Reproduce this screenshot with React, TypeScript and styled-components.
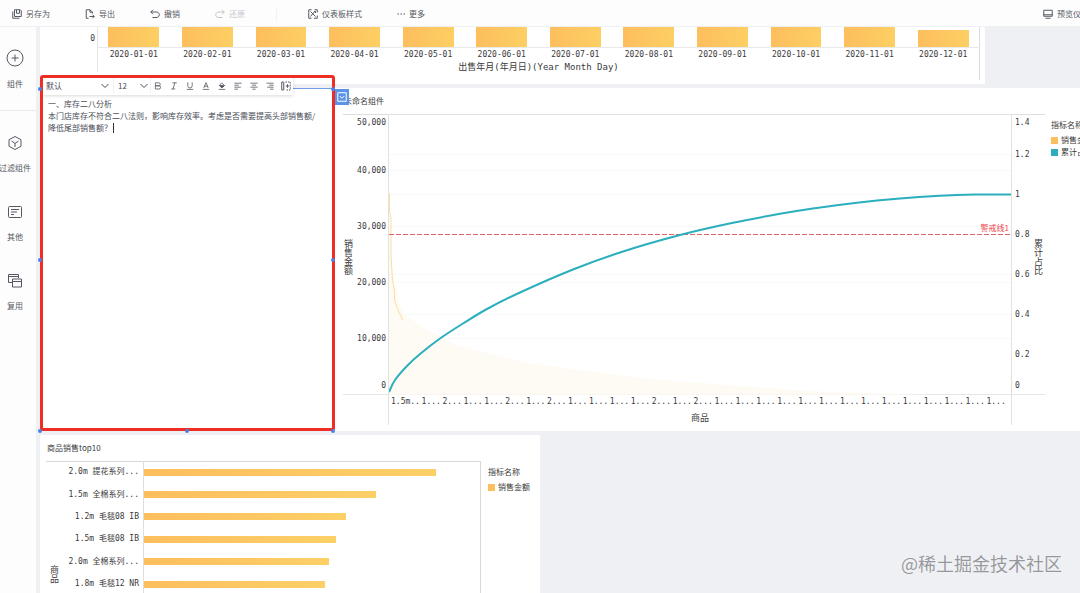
import React from 'react';
import styled, { createGlobalStyle } from 'styled-components';

const sans = '"Noto Sans CJK SC", "Noto Sans", sans-serif';
const mono = '"DejaVu Sans Mono", "Noto Sans CJK SC", monospace';

const GlobalStyle = createGlobalStyle`
  * { box-sizing: border-box; }
  body { margin: 0; background: #eef0f4; }
  button, select, textarea { font: inherit; color: inherit; }
  svg { display: block; flex: none; }
`;

const Page = styled.div`
  position: relative;
  display: flex;
  flex-direction: column;
  height: 100vh;
  overflow: hidden;
  font-family: ${sans};
  font-size: 8px;
  line-height: 12px;
  color: #4a4d57;
`;

/* ---------- top bar ---------- */

const TopBar = styled.header`
  display: flex;
  align-items: center;
  flex: none;
  gap: 35px;
  height: 27px;
  padding: 1px 0 0 12px;
  background: #fdfdfe;
  border-bottom: 1px solid #eff0f3;
`;

const BarButton = styled.button<{ $muted?: boolean; $end?: boolean }>`
  display: flex;
  align-items: center;
  flex: none;
  gap: 4px;
  padding: 0;
  border: 0;
  background: none;
  white-space: nowrap;
  color: ${(p) => (p.$muted ? '#c3c5cb' : '#565962')};
  ${(p) => p.$end && 'margin-left: auto; width: 37px; overflow: hidden;'}
`;

const BarDivider = styled.span`
  width: 1px;
  height: 14px;
  margin: 0 -4px;
  background: #f1f2f5;
`;

/* ---------- side bar ---------- */

const Body = styled.div`
  display: flex;
  flex: 1;
  min-height: 0;
`;

const SideBar = styled.nav`
  flex: none;
  width: 36px;
  background: #fdfdfe;
`;

const SideGroup = styled.div`
  display: flex;
  flex-direction: column;
  gap: 28px;
  padding: 22px 6px 0 0;

  & + & {
    padding-top: 24px;
    border-top: 1px solid #e9eaee;
  }
  &:first-child {
    height: 83px;
  }
`;

const SideButton = styled.button`
  display: flex;
  flex-direction: column;
  align-items: center;
  gap: 11px;
  height: 41px;
  padding: 0;
  border: 0;
  background: none;
  white-space: nowrap;
  color: #565962;
`;

/* ---------- canvas ---------- */

const Canvas = styled.main`
  display: flex;
  flex-direction: column;
  gap: 4px;
  flex: 1;
  min-width: 0;
  padding-left: 4px;
  background: #eef0f4;
`;

const Card = styled.section`
  background: #fff;
`;

const CardTitle = styled.h2`
  margin: 0;
  font-size: 8px;
  font-weight: 400;
  line-height: 26px;
  color: #3a3a3a;
`;

const AxisTitle = styled.div`
  font-family: ${mono};
  font-size: 9px;
  line-height: 12px;
  text-align: center;
  color: #3a3a3a;
`;

const VerticalTitle = styled.div`
  align-self: center;
  writing-mode: vertical-rl;
  text-orientation: upright;
  font-size: 9px;
  line-height: 10px;
  white-space: nowrap;
  color: #3a3a3a;
`;

/* monthly chart */

const MonthlyCard = styled(Card)`
  display: flex;
  flex: none;
  height: 57px;
  margin-right: 95px;
  padding: 0 5px 0 3px;
`;

const MonthlyAxis = styled.div`
  width: 55px;
  height: 45px;
  padding: 6px 2px 0 0;
  border-right: 1px solid #e6e6e6;
  font-family: ${mono};
  text-align: right;
  color: #3a3a3a;
`;

const MonthlyPlot = styled.div`
  flex: 1;
  height: 53px;
  border-right: 1px solid #dcdcdc;
`;

const Months = styled.div`
  display: grid;
  grid-template-columns: repeat(12, 1fr);
  margin: 0 -1px;
`;

const Month = styled.div`
  display: flex;
  flex-direction: column;
  align-items: center;
  justify-content: flex-end;
  height: 34px;
  font-family: ${mono};
  line-height: 13px;
  color: #3a3a3a;
`;

const MonthBar = styled.div<{ $short: boolean }>`
  width: 69%;
  height: ${(p) => (p.$short ? 17 : 20)}px;
  background: linear-gradient(90deg, #fdbe5e, #fdcf63);
`;

const MonthLabel = styled.div`
  width: 100%;
  border-top: 1px solid #e9e9e9;
  text-align: center;
`;

/* text editor widget */

const MiddleRow = styled.div`
  display: flex;
  flex: none;
`;

const EditorCard = styled(Card)`
  position: relative;
  flex: none;
  width: 293px;
  border-top: 1px solid #6f9de8;
`;

const Highlight = styled.div`
  position: absolute;
  inset: -14px -2px 0 0;
  border: 3px solid #ee2d24;
  border-radius: 3px;
  pointer-events: none;
`;

const Handle = styled.span<{ $x: number; $y: number }>`
  position: absolute;
  left: ${(p) => p.$x}%;
  top: ${(p) => p.$y}%;
  width: 4px;
  height: 4px;
  margin: -2px;
  border-radius: 50%;
  background: #4b83e2;
`;

const FormatBar = styled.div`
  position: absolute;
  top: -13px;
  left: 3px;
  display: flex;
  align-items: center;
  height: 19px;
  background: #fff;
  box-shadow: 0 1px 3px rgba(0, 0, 0, 0.15);
`;

const SelectBox = styled.label<{ $wide?: boolean }>`
  display: flex;
  align-items: center;
  width: ${(p) => (p.$wide ? 71 : 37)}px;
  height: 15px;
  padding: ${(p) => (p.$wide ? '0 4px 0 3px' : '0 2px 0 4px')};
  border-right: 1px solid #f0f0f0;

  select {
    flex: 1;
    min-width: 0;
    padding: 0;
    border: 0;
    outline: 0;
    appearance: none;
    background: none;
  }
`;

const FormatButton = styled.button`
  display: flex;
  align-items: center;
  justify-content: center;
  width: 14px;
  height: 14px;
  margin-right: 2px;
  padding: 0;
  border: 0;
  background: none;
  color: #555862;

  &:last-child {
    margin-right: 0;
  }
`;

const EditorText = styled.textarea`
  display: block;
  width: 100%;
  height: 100%;
  padding: 9px 4px 0 8px;
  border: 0;
  outline: 0;
  resize: none;
  background: none;
  font-size: 8px;
  line-height: 12px;
`;

const Caret = styled.span`
  position: absolute;
  top: 34px;
  left: 73px;
  width: 1px;
  height: 10px;
  background: #333;
`;

const MenuButton = styled.button`
  position: absolute;
  z-index: 1;
  top: 0;
  left: 295px;
  display: flex;
  align-items: center;
  justify-content: center;
  width: 14px;
  height: 16px;
  padding: 0;
  border: 0;
  background: #5b92ea;
  color: #fff;
`;

/* combined chart */

const ComboCard = styled(Card)`
  flex: 1;
  min-width: 0;
  height: 343px;
  padding-left: 10px;
  overflow: hidden;
`;

const ComboTitle = styled(CardTitle)`
  padding-left: 1px;
`;

const ComboBody = styled.div`
  display: flex;
`;

const ComboAxis = styled.div<{ $right?: boolean }>`
  display: flex;
  flex: none;
  justify-content: space-between;
  width: ${(p) => (p.$right ? 33 : 45)}px;
  height: 281px;
  padding: ${(p) => (p.$right ? '0 2px 0 3px' : '0 2px 0 0')};
  border-top: 1px solid #dedede;
  border-bottom: 1px solid #e6e6e6;

  ${VerticalTitle} {
    padding-top: 4px;
  }
`;

const Ticks = styled.ol<{ $share: number; $right?: boolean }>`
  display: flex;
  flex-direction: column;
  margin: 0;
  padding: 0;
  list-style: none;
  font-family: ${mono};
  color: #3a3a3a;

  li {
    display: flex;
    align-items: center;
    justify-content: ${(p) => (p.$right ? 'flex-start' : 'flex-end')};
    height: ${(p) => p.$share}px;
  }
  li:first-child {
    height: 16px;
    margin-bottom: auto;
  }
  li:last-child {
    height: 16px;
    margin-top: auto;
  }
`;

const ComboPlot = styled.div`
  flex: 1;
  min-width: 0;
  height: 311px;
  border: solid #e2e2e2;
  border-width: 1px 1px 0;
`;

const PlotArea = styled.div`
  position: relative;
  height: 280px;
  border-bottom: 1px solid #e6e6e6;
`;

const WarningLabel = styled.span`
  position: absolute;
  right: 2px;
  top: 107px;
  color: #f04049;
`;

const ProductTicks = styled.div`
  display: flex;
  justify-content: space-between;
  padding: 1px 5px 4px 2px;
  font-family: ${mono};
  white-space: nowrap;
  color: #3a3a3a;
`;

const Legend = styled.div<{ $clipped?: boolean }>`
  flex: none;
  width: ${(p) => (p.$clipped ? 35 : 59)}px;
  padding: 5px 0 0 ${(p) => (p.$clipped ? 6 : 7)}px;
  overflow: hidden;
  white-space: nowrap;
  color: #3a3a3a;
`;

const LegendTitle = styled.div`
  margin-bottom: 3px;
`;

const LegendItem = styled.div<{ $color: string }>`
  display: flex;
  align-items: center;
  gap: 3px;

  &::before {
    content: '';
    flex: none;
    width: 7px;
    height: 7px;
    background: ${(p) => p.$color};
  }
`;

/* top ten chart */

const TopCard = styled(Card)`
  flex: none;
  width: calc(50% - 20px);
  padding-left: 6px;
`;

const TopTitle = styled(CardTitle)`
  padding-left: 1px;
`;

const TopBody = styled.div`
  display: flex;
`;

const TopChart = styled.div`
  display: flex;
  flex: 1;
  height: 224px;
  border: solid #d9d9d9;
  border-width: 1px 1px 0 0;
`;

const TopAxisTitle = styled(VerticalTitle)`
  width: 16px;
  text-align: center;
  line-height: 16px;
`;

const Rows = styled.div`
  display: grid;
  grid-template-rows: repeat(10, 1fr);
  flex: 1;
  margin-top: -1px;
`;

const ProductRow = styled.div`
  display: flex;
`;

const ProductName = styled.span`
  display: flex;
  align-items: center;
  justify-content: flex-end;
  width: 82px;
  padding-right: 4px;
  border-right: 1px solid #dedede;
  font-family: ${mono};
  white-space: pre;
  color: #3a3a3a;
`;

const Track = styled.span`
  display: flex;
  align-items: center;
  flex: 1;
`;

const ProductBar = styled.span<{ $share: number }>`
  width: ${(p) => p.$share}%;
  height: 7px;
  background: linear-gradient(90deg, #fdbe5e, #fdd067);
`;

const Watermark = styled.div`
  position: absolute;
  right: 18px;
  bottom: 18px;
  font-size: 18px;
  line-height: 24px;
  color: #97989b;
  text-shadow: 0 0 1px #fff;
`;

/* ---------- icons ---------- */

type IconProps = { size?: number; box?: number; children: React.ReactNode; width?: number };

const Icon = ({ size = 10, box = 20, width = 2, children }: IconProps) => (
  <svg
    width={size}
    height={size}
    viewBox={`0 0 ${box} ${box}`}
    fill="none"
    stroke="currentColor"
    strokeWidth={width}
    aria-hidden="true"
  >
    {children}
  </svg>
);

const SaveIcon = () => (
  <Icon>
    <path d="M5 1.500h11.500l2 2V15H5zM9 1.500v7h6v-7M1.500 5v13.500H15" />
  </Icon>
);
const ExportIcon = () => (
  <Icon>
    <path d="M7 18.500H2.500v-17H10l5 5V9M10 1.500v5h5M9 15h9M15 11.500l3.500 3.500-3.500 3.500" />
  </Icon>
);
const UndoIcon = () => (
  <Icon>
    <path d="M6 1.500 1.500 6 6 10.500M1.500 6H12c4 0 6.500 2 6.500 5.500S16 17 12 17H5" />
  </Icon>
);
const RedoIcon = () => (
  <Icon>
    <path d="M14 1.500 18.500 6 14 10.500M18.500 6H8c-4 0-6.500 2-6.500 5.500S4 17 8 17h7" />
  </Icon>
);
const StyleIcon = () => (
  <Icon>
    <path d="M7 1.500H1.500V7M13 1.500h5.500V7M1.500 12v6.500H7M18.500 13v5.500H12M5 5l10 10M14 4 5 15M12 5h3v3M1.500 7v5" />
  </Icon>
);
const MoreIcon = () => (
  <Icon size={8} box={16}>
    <path d="M1 8h3M7 8h3M13 8h3" />
  </Icon>
);
const ScreenIcon = () => (
  <Icon>
    <path d="M1.500 2.500h17v12h-17zM5 18.500h10M1.500 11.500h17" />
  </Icon>
);
const PlusIcon = () => (
  <Icon size={18} box={18} width={1}>
    <circle cx="9" cy="9" r="8" />
    <path d="M9 5.500v7M5.500 9h7" />
  </Icon>
);
const CubeIcon = () => (
  <Icon size={16} box={16} width={1}>
    <path d="m8 1.500 6 3.200v6.600l-6 3.200-6-3.200V4.700zM8 12V8.500L4.500 6M8 8.500 11.500 6" strokeLinejoin="round" />
  </Icon>
);
const NoteIcon = () => (
  <Icon size={16} box={16} width={1}>
    <rect x="1.500" y="2.500" width="13" height="11" rx="1" />
    <path d="M4 5.500h8M4 8h6M4 10.500h3" />
  </Icon>
);
const CopyIcon = () => (
  <Icon size={16} box={16} width={1}>
    <path d="M5 9.500H1.500v-8h10V5M1.500 3.500h10" />
    <path d="M5.500 6h9v8h-9zM5.500 8.500h9" />
  </Icon>
);
const Chevron = () => (
  <Icon size={8} box={16}>
    <path d="m1 4 7 7 7-7" />
  </Icon>
);

const formatIcons: [string, React.ReactNode][] = [
  ['加粗', <path key="b" d="M3.500 2h8.500a3.500 3.500 0 0 1 0 7.500H3.500zM3.500 9.500h9a4 4 0 0 1 0 8h-9z" />],
  ['斜体', <path key="i" d="M6 2h11M3 17.500h10M12 2 7.500 17.500" />],
  ['下划线', <path key="u" d="M4.500 1v8.500a5.500 5.500 0 0 0 11 0V1M2 18.500h16" />],
  ['文字颜色', <path key="a" d="M4.500 15 10 1.500 15.500 15M6 10.500h8M2 18.500h16" />],
  [
    '填充颜色',
    <g key="f">
      <path d="m9 2 7 7-6 5.500L3.500 9z" />
      <path d="M4 9h12l-6 5.500z" fill="currentColor" />
      <path d="M2 18.500h16" />
    </g>,
  ],
  ['左对齐', <path key="l" d="M1 3h18M1 8h11M1 13h16M1 18h9" />],
  ['居中', <path key="c" d="M1 3h18M5 8h10M1 13h18M6 18h8" />],
  ['右对齐', <path key="r" d="M1 3h18M8 8h11M3 13h16M10 18h9" />],
  [
    '插入字段',
    <g key="n">
      <path d="M5 2H1.500v16H5M5.500 2v16" />
      <path d="M9 2h9.500v16H9" strokeDasharray="3 2" />
      <path d="M9.500 10h7M13 6.500v7" />
    </g>,
  ],
];

/* ---------- data ---------- */

const months = Array.from({ length: 12 }, (_, i) => `2020-${String(i + 1).padStart(2, '0')}-01`);

const salesTicks = ['50,000', '40,000', '30,000', '20,000', '10,000', '0'];
const shareTicks = ['1.4', '1.2', '1', '0.8', '0.6', '0.4', '0.2', '0'];
const productTicks = ['1.5m..', ...'1211212111121211111111111111'.split('').map((n) => `${n}...`)];

const products: [string, number][] = [
  ['2.0m 提花系列...', 87],
  ['1.5m 全棉系列...', 69],
  ['1.2m 毛毯08 IB', 60],
  ['1.5m 毛毯08 IB', 57],
  ['2.0m 全棉系列...', 55],
  ['1.8m 毛毯12 NR', 54],
];

const note = '一、库存二八分析\n本门店库存不符合二八法则，影响库存效率。考虑是否需要提高头部销售额/\n降低尾部销售额？';

const cumulative: [number, number][] = [
  [0, 277], [6, 265], [18, 251], [31, 239], [51, 223.5], [74, 208.5], [98, 194], [131, 177.5],
  [184, 154.5], [234, 136.5], [291, 120], [344, 107.8], [391, 98.8], [424, 93.5],
  [468, 87.8], [508, 83.8], [551, 80.8], [586, 79.6], [622, 79.6],
];

const smooth = (pts: [number, number][]) =>
  pts.reduce((d, [x, y], i) => {
    if (i === 0) return `M${x} ${y}`;
    const before = pts[Math.max(i - 2, 0)];
    const from = pts[i - 1];
    const after = pts[Math.min(i + 1, pts.length - 1)];
    const c1 = [from[0] + (x - before[0]) / 6, from[1] + (y - before[1]) / 6];
    const c2 = [x - (after[0] - from[0]) / 6, y - (after[1] - from[1]) / 6];
    return `${d} C${c1.join(' ')} ${c2.join(' ')} ${x} ${y}`;
  }, '');

const ParetoGraph = () => (
  <svg width="100%" height="280" viewBox="0 0 622 280" preserveAspectRatio="none" fill="none" aria-hidden="true">
    {[40, 56, 80, 112, 160, 168, 200, 224].map((y) => (
      <path key={y} d={`M0 ${y - 0.5}H622`} stroke="#f8f8f8" />
    ))}
    <path
      d="M0 280V79l1 20 1 40 3 28 6 22 4 10 20 14 34 18 70 17 120 16 160 12 120 4H0z"
      fill="#fefaf1"
      fillOpacity="0.8"
    />
    <path d="M.5 79v18l1.500 6v38l1.500 24 2 12v8l2 6 2 5 2 4 2 5" stroke="#fbdf9f" />
    <path d="M0 119.500H622" stroke="#e5636c" strokeDasharray="5 2" />
    <path d={smooth(cumulative)} stroke="#2bafbd" strokeWidth="2" vectorEffect="non-scaling-stroke" />
  </svg>
);

export default function App() {
  return (
    <Page>
      <GlobalStyle />
      <TopBar>
        <BarButton><SaveIcon />另存为</BarButton>
        <BarButton><ExportIcon />导出</BarButton>
        <BarButton><UndoIcon />撤销</BarButton>
        <BarButton $muted disabled><RedoIcon />还原</BarButton>
        <BarDivider />
        <BarButton><StyleIcon />仪表板样式</BarButton>
        <BarButton><MoreIcon />更多</BarButton>
        <BarButton $end><ScreenIcon />预览仪表板</BarButton>
      </TopBar>

      <Body>
        <SideBar>
          <SideGroup>
            <SideButton><PlusIcon />组件</SideButton>
          </SideGroup>
          <SideGroup>
            <SideButton><CubeIcon />过滤组件</SideButton>
            <SideButton><NoteIcon />其他</SideButton>
            <SideButton><CopyIcon />复用</SideButton>
          </SideGroup>
        </SideBar>

        <Canvas>
          <MonthlyCard>
            <MonthlyAxis>0</MonthlyAxis>
            <MonthlyPlot>
              <Months>
                {months.map((m, i) => (
                  <Month key={m}>
                    <MonthBar $short={i === 11} />
                    <MonthLabel>{m}</MonthLabel>
                  </Month>
                ))}
              </Months>
              <AxisTitle>出售年月(年月日)(Year Month Day)</AxisTitle>
            </MonthlyPlot>
          </MonthlyCard>

          <MiddleRow>
            <EditorCard>
              <EditorText aria-label="文本内容" defaultValue={note} spellCheck={false} />
              <Caret />
              <FormatBar>
                <SelectBox $wide>
                  <select aria-label="字体" defaultValue="默认">
                    <option>默认</option>
                  </select>
                  <Chevron />
                </SelectBox>
                <SelectBox>
                  <select aria-label="字号" defaultValue="12">
                    <option>12</option>
                  </select>
                  <Chevron />
                </SelectBox>
                {formatIcons.map(([name, shape]) => (
                  <FormatButton key={name} aria-label={name}>
                    <Icon size={name === '插入字段' ? 10 : 8}>{shape}</Icon>
                  </FormatButton>
                ))}
              </FormatBar>
              <Highlight />
              <Handle $x={0} $y={0} />
              <Handle $x={100} $y={0} />
              <Handle $x={0} $y={50} />
              <Handle $x={100} $y={50} />
              <Handle $x={0} $y={100} />
              <Handle $x={50} $y={100} />
              <Handle $x={100} $y={100} />
              <MenuButton aria-label="组件菜单">
                <Icon size={10}>
                  <path d="M1.500 1.500h17v17h-17zM5.500 8l4.500 4.500L14.500 8" />
                </Icon>
              </MenuButton>
            </EditorCard>

            <ComboCard>
              <ComboTitle>未命名组件</ComboTitle>
              <ComboBody>
                <ComboAxis>
                  <VerticalTitle>销售金额</VerticalTitle>
                  <Ticks $share={56}>
                    {salesTicks.map((t) => <li key={t}>{t}</li>)}
                  </Ticks>
                </ComboAxis>
                <ComboPlot>
                  <PlotArea>
                    <ParetoGraph />
                    <WarningLabel>警戒线1</WarningLabel>
                  </PlotArea>
                  <ProductTicks>
                    {productTicks.map((t, i) => <span key={i}>{t}</span>)}
                  </ProductTicks>
                  <AxisTitle>商品</AxisTitle>
                </ComboPlot>
                <ComboAxis $right>
                  <Ticks $share={40} $right>
                    {shareTicks.map((t) => <li key={t}>{t}</li>)}
                  </Ticks>
                  <VerticalTitle>累计占比</VerticalTitle>
                </ComboAxis>
                <Legend $clipped>
                  <LegendTitle>指标名称</LegendTitle>
                  <LegendItem $color="#fdbe5e">销售金额</LegendItem>
                  <LegendItem $color="#2bafbd">累计占比</LegendItem>
                </Legend>
              </ComboBody>
            </ComboCard>
          </MiddleRow>

          <TopCard>
            <TopTitle>商品销售top10</TopTitle>
            <TopBody>
              <TopChart>
                <TopAxisTitle>商品</TopAxisTitle>
                <Rows>
                  {products.map(([name, share]) => (
                    <ProductRow key={name}>
                      <ProductName>{name}</ProductName>
                      <Track><ProductBar $share={share} /></Track>
                    </ProductRow>
                  ))}
                </Rows>
              </TopChart>
              <Legend>
                <LegendTitle>指标名称</LegendTitle>
                <LegendItem $color="#fdbe5e">销售金额</LegendItem>
              </Legend>
            </TopBody>
          </TopCard>
        </Canvas>
      </Body>
      <Watermark>@稀土掘金技术社区</Watermark>
    </Page>
  );
}
